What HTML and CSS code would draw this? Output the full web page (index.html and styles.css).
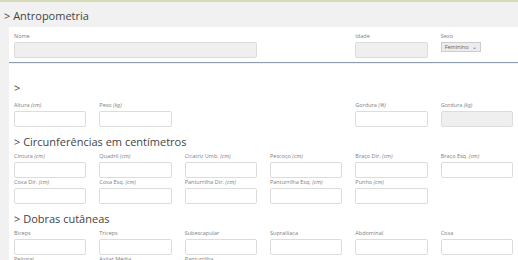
FILE: index.html
```html
<!DOCTYPE html>
<html lang="pt-BR">
<head>
    <meta charset="UTF-8">
    <meta name="viewport" content="width=device-width, initial-scale=1.0">
    <title>Antropometria</title>
    <link rel="stylesheet" href="styles.css">
</head>
<body>
    <h2 class="page-title">&gt; Antropometria</h2>

    <div class="card card-top">
        <div class="grid">
            <div class="field span-3">
                <label>Nome</label>
                <input type="text" class="readonly" disabled>
            </div>
            <div class="field col-5">
                <label>Idade</label>
                <input type="text" class="readonly" disabled>
            </div>
            <div class="field">
                <label>Sexo</label>
                <div class="select-sm">Feminino <span class="chev">&#8964;</span></div>
            </div>
        </div>
    </div>

    <div class="card card-main">
        <h3 class="section-title first">&gt;</h3>
        <div class="grid">
            <div class="field"><label>Altura <em>(cm)</em></label><input type="text"></div>
            <div class="field"><label>Peso <em>(kg)</em></label><input type="text"></div>
            <div class="field col-5"><label>Gordura <em>(%)</em></label><input type="text"></div>
            <div class="field"><label>Gordura <em>(kg)</em></label><input type="text" class="readonly" disabled></div>
        </div>

        <h3 class="section-title">&gt; Circunferências em centímetros</h3>
        <div class="grid">
            <div class="field"><label>Cintura <em>(cm)</em></label><input type="text"></div>
            <div class="field"><label>Quadril <em>(cm)</em></label><input type="text"></div>
            <div class="field"><label>Cicatriz Umb. <em>(cm)</em></label><input type="text"></div>
            <div class="field"><label>Pescoço <em>(cm)</em></label><input type="text"></div>
            <div class="field"><label>Braço Dir. <em>(cm)</em></label><input type="text"></div>
            <div class="field"><label>Braço Esq. <em>(cm)</em></label><input type="text"></div>
            <div class="field"><label>Coxa Dir. <em>(cm)</em></label><input type="text"></div>
            <div class="field"><label>Coxa Esq. <em>(cm)</em></label><input type="text"></div>
            <div class="field"><label>Panturrilha Dir. <em>(cm)</em></label><input type="text"></div>
            <div class="field"><label>Panturrilha Esq. <em>(cm)</em></label><input type="text"></div>
            <div class="field"><label>Punho <em>(cm)</em></label><input type="text"></div>
        </div>

        <h3 class="section-title">&gt; Dobras cutâneas</h3>
        <div class="grid">
            <div class="field"><label>Biceps</label><input type="text"></div>
            <div class="field"><label>Triceps</label><input type="text"></div>
            <div class="field"><label>Subescapular</label><input type="text"></div>
            <div class="field"><label>Suprailíaca</label><input type="text"></div>
            <div class="field"><label>Abdominal</label><input type="text"></div>
            <div class="field"><label>Coxa</label><input type="text"></div>
            <div class="field"><label>Peitoral</label><input type="text"></div>
            <div class="field"><label>Axilar Média</label><input type="text"></div>
            <div class="field"><label>Panturrilha</label><input type="text"></div>
        </div>
    </div>
</body>
</html>
```

FILE: styles.css
```css
body {
    margin: 0;
    background: #f1f1f1;
    border-top: 2px solid #d3dab4;
    font-family: "Open Sans", Arial, sans-serif;
    color: #555;
}
.page-title {
    margin: 0;
    padding: 6px 4px 4px;
    font-size: 11px;
    line-height: 15px;
    font-weight: normal;
    color: #444;
}
.card {
    margin-left: 9px;
    background: #fff;
    padding: 0 5px;
}
.card-top {
    padding-top: 5px;
    padding-bottom: 4px;
    border-bottom: 1px solid #8e9dab;
}
.card-main {
    margin-top: 1px;
    padding-top: 16px;
}
.section-title {
    margin: 0;
    padding: 7px 0 3px;
    font-size: 11px;
    line-height: 15px;
    font-weight: normal;
    color: #444;
}
.section-title.first {
    padding: 0 0 6px;
}
.grid {
    display: grid;
    grid-template-columns: repeat(6, 1fr);
    column-gap: 13px;
}
.span-3 {
    grid-column: span 3;
}
.col-5 {
    grid-column-start: 5;
}
.field label {
    display: block;
    font-size: 5.5px;
    line-height: 8px;
    margin-bottom: 2px;
    color: #808080;
}
.field label em {
    font-style: italic;
}
.field input {
    display: block;
    box-sizing: border-box;
    width: 100%;
    height: 16px;
    margin: 0;
    border: 1px solid #dcdcdc;
    border-radius: 2px;
    background: #fff;
}
.field input.readonly {
    background: #efefef;
}
.select-sm {
    display: block;
    box-sizing: border-box;
    width: 40px;
    height: 10px;
    padding: 0 3px;
    border: 1px solid #ccc;
    background: #ececec;
    font-size: 5.5px;
    line-height: 8px;
    color: #666;
    white-space: nowrap;
    overflow: hidden;
}
.select-sm .chev {
    margin-left: 2px;
    font-size: 6px;
}
```
